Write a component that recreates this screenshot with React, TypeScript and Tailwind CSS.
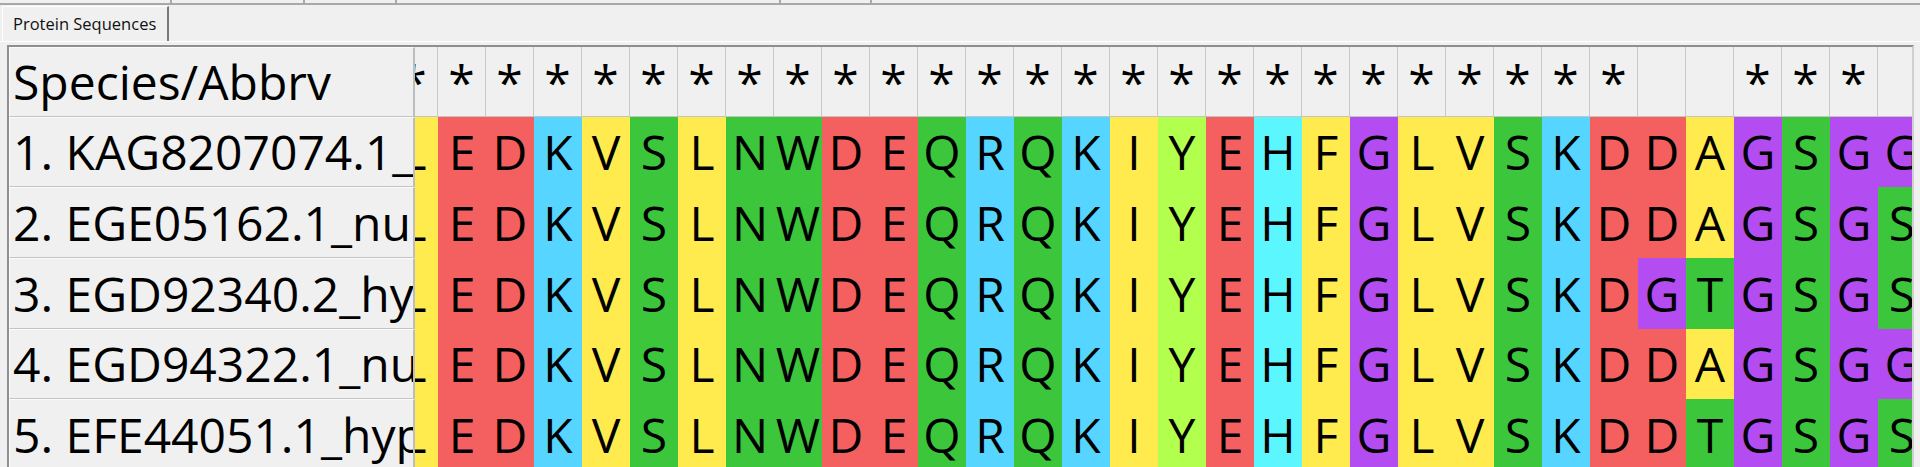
import React from 'react';

// residue colour scheme (same families as the reference alignment viewer)
const RESIDUE_BG: Record<string, string> = {
  D: 'bg-[#f46060]',
  E: 'bg-[#f46060]',
  K: 'bg-[#55d5ff]',
  R: 'bg-[#55d5ff]',
  H: 'bg-[#5cf6ff]',
  Y: 'bg-[#b3ff4d]',
  G: 'bg-[#b34df2]',
  A: 'bg-[#ffeb4d]',
  V: 'bg-[#ffeb4d]',
  L: 'bg-[#ffeb4d]',
  I: 'bg-[#ffeb4d]',
  F: 'bg-[#ffeb4d]',
  M: 'bg-[#ffeb4d]',
  S: 'bg-[#3cc63c]',
  T: 'bg-[#3cc63c]',
  N: 'bg-[#3cc63c]',
  Q: 'bg-[#3cc63c]',
  W: 'bg-[#3cc63c]',
};

const ROWS = [
  { name: '1. KAG8207074.1_hypothetical_protein', seq: 'LEDKVSLNWDEQRQKIYEHFGLVSKDDAGSGG', h: 'h-[70px]' },
  { name: '2. EGE05162.1_nucleolar_protein', seq: 'LEDKVSLNWDEQRQKIYEHFGLVSKDDAGSGS', h: 'h-[71px]' },
  { name: '3. EGD92340.2_hypothetical_protein', seq: 'LEDKVSLNWDEQRQKIYEHFGLVSKDGTGSGS', h: 'h-[71px]' },
  { name: '4. EGD94322.1_nucleolar_protein', seq: 'LEDKVSLNWDEQRQKIYEHFGLVSKDDAGSGG', h: 'h-[70px]' },
  { name: '5. EFE44051.1_hypothetical_protein', seq: 'LEDKVSLNWDEQRQKIYEHFGLVSKDDTGSGS', h: 'h-[71px]' },
];

const conserved = ROWS[0].seq.split('').map((c, i) => ROWS.every((r) => r.seq[i] === c));

function TopStrip() {
  // the cut-off status/toolbar strip above the tab
  const widths = ['w-[172px]', 'w-[133px]', 'w-[92px]', 'w-[384px]', 'w-[91px]'];
  return (
    <div className="flex h-[5px] border-b-2 border-b-[#a8a8a8]">
      {widths.map((w) => (
        <div key={w} className={`${w} border-r-2 border-r-[#a8a8a8]`} />
      ))}
      <div className="flex-1" />
    </div>
  );
}

function TabBar() {
  return (
    <div className="flex h-[37px] items-end border-b border-b-[#ffffff] pl-[2px]">
      <div className="flex h-[35px] w-[167px] items-center border-l border-t border-r-2 border-l-[#ffffff] border-t-[#ffffff] border-r-[#7a7a7a] pl-[10px] text-[16.5px] text-[#111]">
        Protein Sequences
      </div>
    </div>
  );
}

function NameCell({ children, h }: { children: React.ReactNode; h: string }) {
  return (
    <div
      className={`${h} flex w-[406px] shrink-0 items-center overflow-hidden whitespace-nowrap border-b border-r-2 border-t border-l border-b-[#c4c4c4] border-r-[#bdbdbd] border-t-[#fbfbfb] border-l-[#fbfbfb] pl-[3px] text-[48px] leading-none text-black`}
    >
      {children}
    </div>
  );
}

export default function App() {
  return (
    <div className="h-[467px] w-[1920px] overflow-hidden bg-[#f0f0f0] font-['Open_Sans','Noto_Sans',sans-serif]">
      <TopStrip />
      <TabBar />

      {/* alignment grid */}
      <div className="ml-[7px] mt-[3px] w-[1907px] border-l-2 border-t-2 border-r-2 border-l-[#8f8f8f] border-t-[#8f8f8f] border-r-[#cfcfcf]">
        {/* header row */}
        <div className="flex">
          <NameCell h="h-[70px]">Species/Abbrv</NameCell>
          <div className="h-[70px] flex-1 overflow-hidden border-b border-b-[#c4c4c4]">
            <div className="ml-[-25px] flex">
              {conserved.map((c, i) => (
                <div
                  key={i}
                  className="flex h-[69px] w-[48px] shrink-0 items-center justify-center border-r border-r-[#c8c8c8] text-[48px] leading-none text-black"
                >
                  {c ? '*' : ''}
                </div>
              ))}
            </div>
          </div>
        </div>

        {ROWS.map((row) => (
          <div key={row.name} className="flex">
            <NameCell h={row.h}>{row.name}</NameCell>
            <div className={`${row.h} flex-1 overflow-hidden`}>
              <div className="ml-[-25px] flex h-full">
                {row.seq.split('').map((r, i) => (
                  <div
                    key={i}
                    className={`${RESIDUE_BG[r]} flex h-full w-[48px] shrink-0 items-center justify-center text-[48px] leading-none text-black`}
                  >
                    {r}
                  </div>
                ))}
              </div>
            </div>
          </div>
        ))}
      </div>
    </div>
  );
}
